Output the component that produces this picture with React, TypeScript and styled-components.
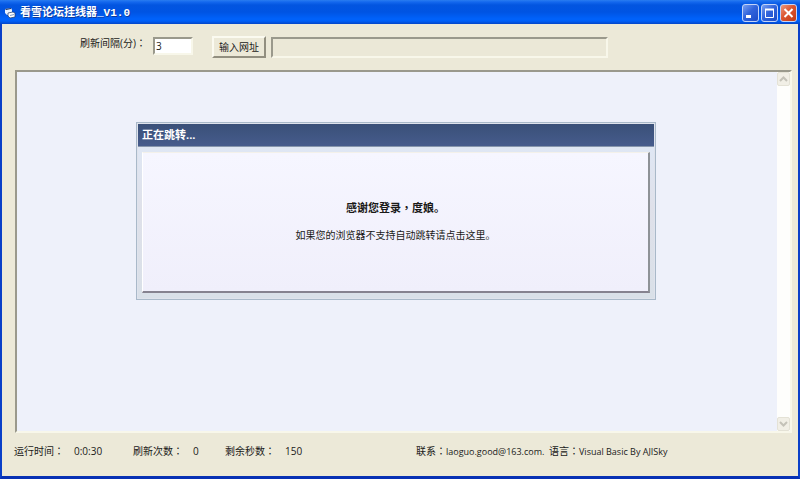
import React from 'react';
import styled, { createGlobalStyle, css } from 'styled-components';

const GlobalStyle = createGlobalStyle`
  * { box-sizing: border-box; }
  body {
    margin: 0;
    background: #ece9d8;
    color: #1a1a18;
    font: 10px/14px "Open Sans", "Noto Sans CJK SC", sans-serif;
  }
  button, input { font: inherit; color: inherit; }
`;

const sunken = css`
  border: 2px solid;
  border-color: #9a998c #f8f7ea #f8f7ea #9a998c;
`;

const Window = styled.div`
  display: flex;
  flex-direction: column;
  min-height: 100vh;
  border: solid #0a3fc8;
  border-width: 0 2px 3px;
  border-bottom-color: #0831b4;
  background: #ece9d8;
`;

const TitleBar = styled.header`
  display: flex;
  align-items: center;
  height: 24px;
  margin: 0 -2px;
  padding: 2px 3px 0 4px;
  background: linear-gradient(#2a7df0 0, #1468ee 2px, #0355e0 5px, #0054e3 12px, #0062fb 19px, #0060f8 21px, #0446c8 24px);
`;

const Title = styled.h1`
  flex: 1;
  margin: 0 0 0 4px;
  color: #fff;
  font: bold 11px/16px "Liberation Mono", "Noto Sans CJK SC", monospace;
  text-shadow: 1px 1px 0 #0a3a9c;
`;

const Caption = styled.div`
  display: flex;
  gap: 2px;
`;

const CaptionButton = styled.button<{ $close?: boolean }>`
  display: flex;
  width: 17px;
  height: 18px;
  padding: 0;
  border: 1px solid #c3d4f8;
  border-radius: 3px;
  background: ${(p) =>
    p.$close
      ? 'linear-gradient(135deg, #ec9a80, #dc5530 45%, #c03a14)'
      : 'linear-gradient(135deg, #7aa0f0, #3164dc 45%, #1c4cc8)'};
  svg { width: 15px; height: 16px; }
`;

const Toolbar = styled.form`
  display: flex;
  align-items: flex-start;
  padding: 12px 13px 12px 78px;
`;

const IntervalLabel = styled.label`
  margin-right: 8px;
  width: 65px;
  white-space: nowrap;
`;

const Interval = styled.input`
  ${sunken}
  width: 40px;
  height: 18px;
  margin: 1px 19px 0 0;
  padding: 0 1px;
  background: #fff;
`;

const GoButton = styled.button`
  width: 54px;
  height: 22px;
  margin-right: 5px;
  padding: 0;
  border: 2px solid;
  border-color: #fbfaf0 #928f80 #928f80 #fbfaf0;
  background: #ece9d8;
`;

const Address = styled.input`
  ${sunken}
  flex: 1;
  min-width: 0;
  height: 21px;
  margin: 1px 177px 0 0;
  background: #ebe8d7;
`;

const Browser = styled.main`
  ${sunken}
  display: flex;
  flex: 1;
  margin: 0 6px 0 13px;
  background: #eef1fa;
`;

const Page = styled.div`
  flex: 1;
  padding: 50px 121px 0 119px;
`;

const Notice = styled.section`
  border: 1px solid #a9b9c9;
  padding: 1px;
  background: #dfe3ec;
`;

const NoticeTitle = styled.h2`
  margin: 0;
  padding: 4px;
  border-bottom: 1px solid #8796ad;
  background: linear-gradient(#3a5078, #465b8c);
  color: #fff;
  font: bold 11px/14px "Open Sans", "Noto Sans CJK SC", sans-serif;
`;

const NoticeBody = styled.div`
  padding: 5px 4px 5px;
  background: linear-gradient(#dfe7f4, #dfe1ea 60px, #d9e0e8);
`;

const Panel = styled.div`
  display: flex;
  flex-direction: column;
  align-items: center;
  gap: 13px;
  height: 141px;
  padding-top: 47px;
  border: 1px solid;
  border-width: 1px 2px 2px 1px;
  border-color: #f4f1ea #8e9297 #85828f #fff;
  background: linear-gradient(#f6f6ff, #f0effb);
`;

const Message = styled.p<{ $bold?: boolean }>`
  margin: 0;
  font-size: ${(p) => (p.$bold ? '11px' : '10px')};
  font-weight: ${(p) => (p.$bold ? 700 : 400)};
`;

const Link = styled.a`
  color: inherit;
  text-decoration: none;
`;

const Centred = styled.span`
  font-family: "Noto Sans CJK TC", sans-serif;
`;

const ScrollBar = styled.div`
  display: flex;
  flex-direction: column;
  justify-content: space-between;
  width: 13px;
  background: #fefefc;
`;

const ScrollButton = styled.button`
  display: flex;
  width: 13px;
  height: 14px;
  padding: 0;
  border: 1px solid #e4e2d6;
  border-radius: 2px;
  background: #f1efe6;
  svg { width: 11px; height: 12px; }
`;

const StatusBar = styled.footer`
  display: grid;
  grid-template-columns: 60px 59px 60px 32px 60px 131px 133px 1fr;
  align-items: center;
  height: 43px;
  padding: 0 0 7px 12px;
  white-space: nowrap;
`;

const Credit = styled.span`
  font-size: 9px;
`;

const Colon = () => <Centred>：</Centred>;

const FormIcon = () => (
  <svg width="12" height="12" viewBox="0 0 12 12" aria-hidden="true">
    <path d="M1 2l6-1 1 2v4l-5 1-2-2z" fill="#e9f2ff" />
    <path d="M1 2l6-1v1L2 3z" fill="#183060" />
    <path d="M4 6l5-1 2 1v4l-5 1-2-2z" fill="#fff" stroke="#1c3564" strokeWidth=".7" />
    <path d="M6 8l4-1v1L6 9z" fill="#7f98c4" />
  </svg>
);

const Chevron = ({ down }: { down?: boolean }) => (
  <svg viewBox="0 0 11 12" fill="none" stroke="#c4c2b8" strokeWidth="2" aria-hidden="true">
    <path d={down ? 'M2 4l3.500 3.500L9 4' : 'M2 8l3.500-3.500L9 8'} />
  </svg>
);

export default function App() {
  return (
    <>
      <GlobalStyle />
      <Window>
        <TitleBar>
          <FormIcon />
          <Title>看雪论坛挂线器_V1.0</Title>
          <Caption>
            <CaptionButton type="button" aria-label="最小化">
              <svg viewBox="0 0 15 16"><path d="M3 10h5v3H3z" fill="#fff" /></svg>
            </CaptionButton>
            <CaptionButton type="button" aria-label="最大化">
              <svg viewBox="0 0 15 16" fill="none" stroke="#fff">
                <path d="M3.500 4.500h8v8h-8z" />
                <path d="M3 4.500h9" strokeWidth="2" />
              </svg>
            </CaptionButton>
            <CaptionButton type="button" aria-label="关闭" $close>
              <svg viewBox="0 0 15 16" stroke="#fff" strokeWidth="2"><path d="M3.500 4l8 8m0-8l-8 8" /></svg>
            </CaptionButton>
          </Caption>
        </TitleBar>
        <Toolbar onSubmit={(e) => e.preventDefault()}>
          <IntervalLabel htmlFor="interval">刷新间隔(分)<Colon /></IntervalLabel>
          <Interval id="interval" defaultValue="3" />
          <GoButton type="submit">输入网址</GoButton>
          <Address aria-label="网址" />
        </Toolbar>
        <Browser>
          <Page>
            <Notice>
              <NoticeTitle>正在跳转...</NoticeTitle>
              <NoticeBody>
                <Panel>
                  <Message $bold>感谢您登录<Centred>，</Centred>度娘。</Message>
                  <Message><Link href="#">如果您的浏览器不支持自动跳转请点击这里。</Link></Message>
                </Panel>
              </NoticeBody>
            </Notice>
          </Page>
          <ScrollBar>
            <ScrollButton type="button" aria-label="向上滚动"><Chevron /></ScrollButton>
            <ScrollButton type="button" aria-label="向下滚动"><Chevron down /></ScrollButton>
          </ScrollBar>
        </Browser>
        <StatusBar>
          <span>运行时间<Colon /></span>
          <span>0:0:30</span>
          <span>刷新次数<Colon /></span>
          <span>0</span>
          <span>剩余秒数<Colon /></span>
          <span>150</span>
          <span>联系<Colon /><Credit>laoguo.good@163.com.</Credit></span>
          <span>语言<Colon /><Credit>Visual Basic By AJISky</Credit></span>
        </StatusBar>
      </Window>
    </>
  );
}
